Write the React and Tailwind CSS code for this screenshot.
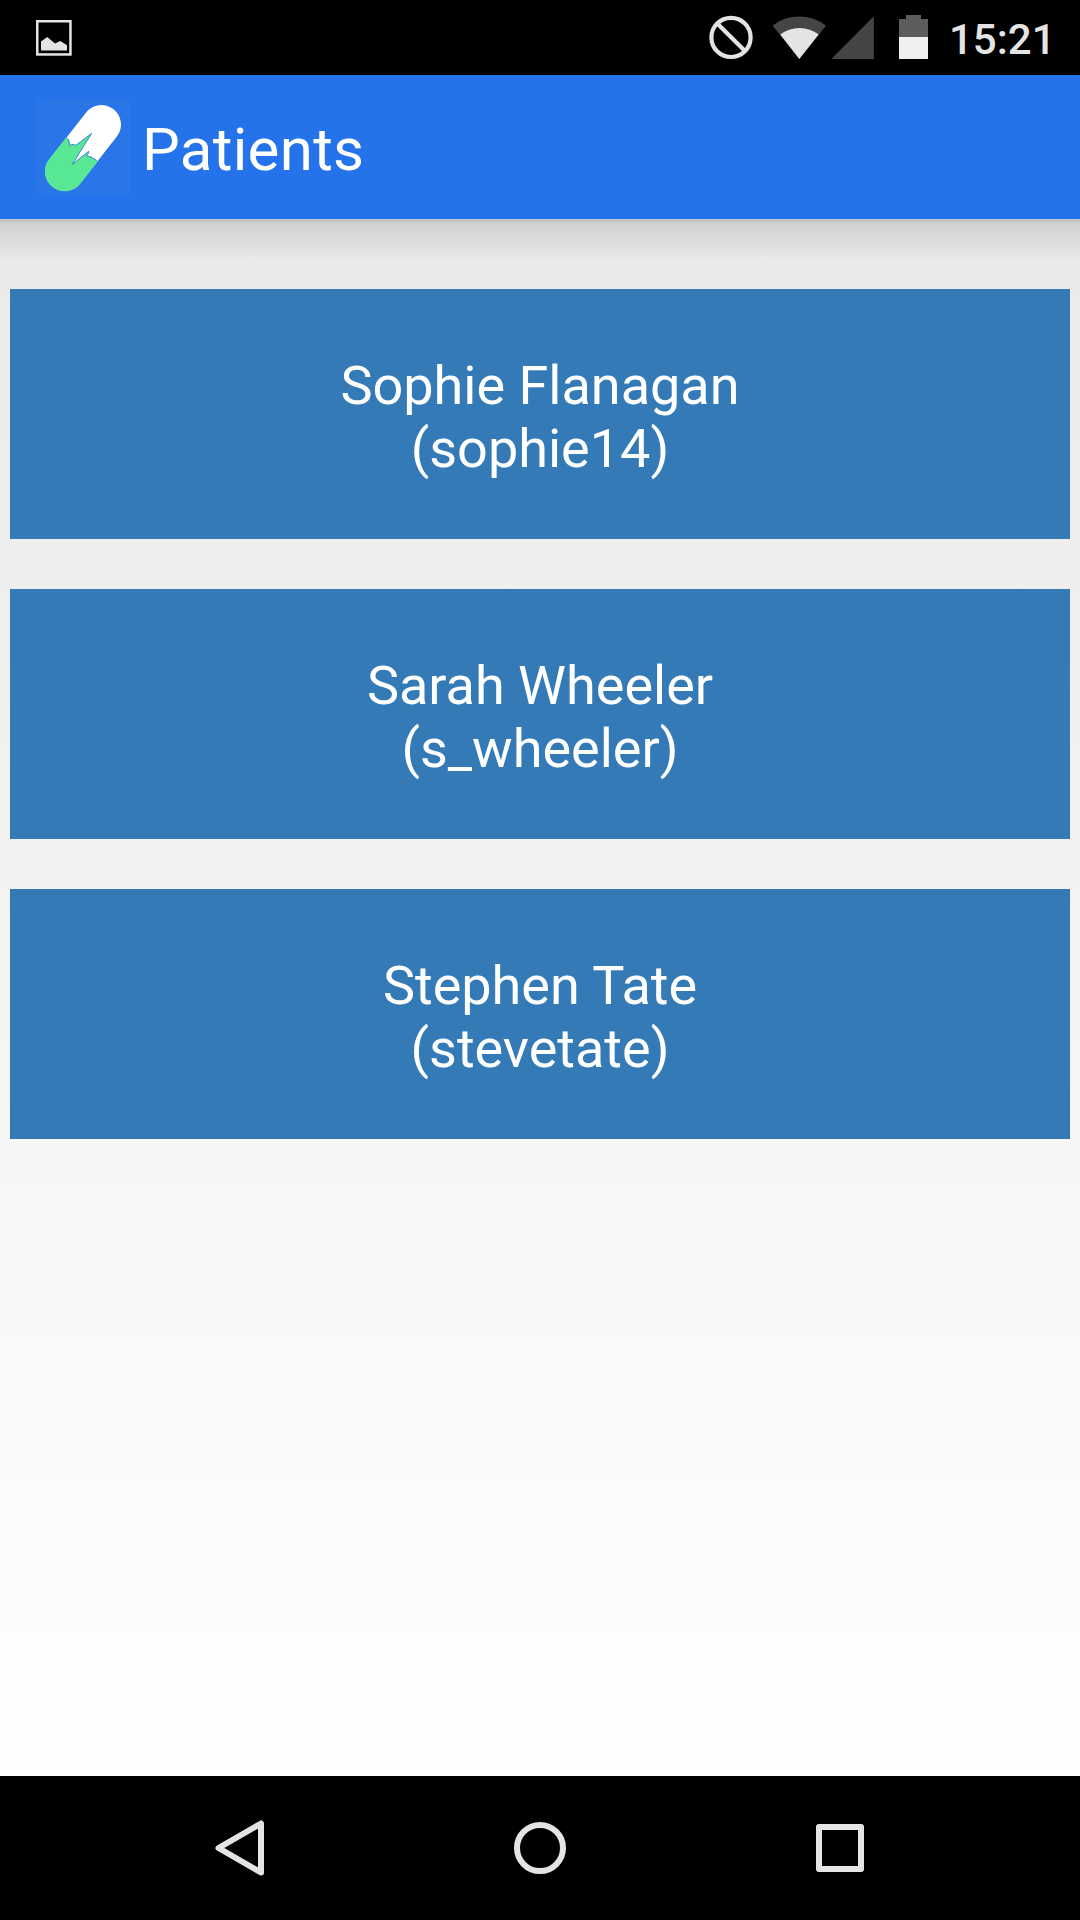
const patients = [
  { name: "Sophie Flanagan", login: "sophie14" },
  { name: "Sarah Wheeler", login: "s_wheeler" },
  { name: "Stephen Tate", login: "stevetate" },
];

function PictureIcon() {
  return (
    <svg className="ml-9 h-[36px] w-[36px]" viewBox="0 0 36 36">
      <rect x="1.25" y="1.25" width="33.2" height="33.2" fill="none" stroke="#e4e4e4" strokeWidth="2.5" />
      <path d="M5 30.5V21.5L11.3 17L19 23.5L24.3 21L31 25.3V30.5Z" fill="#e4e4e4" />
    </svg>
  );
}

function StatusIcons() {
  return (
    <svg className="h-[75px] w-[240px]" viewBox="700 0 240 75">
      <g fill="none" stroke="#e4e4e4" strokeWidth="4.2">
        <circle cx="731" cy="37.4" r="19.6" />
        <path d="M717.5 23.8L745 51" />
      </g>
      <path d="M799.3 58.9L772.6 25.8A42.8 42.8 0 0 1 826 25.8Z" fill="#454545" />
      <path d="M799.3 58.9L780.3 34.6A31 31 0 0 1 818.6 34.6Z" fill="#e4e4e4" />
      <path d="M831.3 59L873.8 16.3V59Z" fill="#454545" />
      <path d="M906 15H921V19H928V37H899V19H906Z" fill="#5c5c5c" />
      <path d="M899 37H928V59H899Z" fill="#f0f0f0" />
    </svg>
  );
}

function PillLogo() {
  return (
    <svg className="ml-[37px] h-[96px] w-[93px] bg-[#2a75e8]" viewBox="37 99 93 96">
      <defs>
        <clipPath id="lower-half">
          <path d="M60 133L66.700 138L68.700 139.700L69.700 145.300L73.300 144.300L75.700 145.300L80.700 141.700L91.700 133.300L72.300 164.300L88.700 151.300L88.300 153.300L86.300 156L91.300 157L97 160.700L102 164V195H37V133Z" />
        </clipPath>
      </defs>
      <path d="M101.500 124.500L64.700 171.500" stroke="#fff" strokeWidth="39" strokeLinecap="round" />
      <path d="M101.500 124.500L64.700 171.500" stroke="#58e895" strokeWidth="39.600" strokeLinecap="round" clipPath="url(#lower-half)" />
      <path d="M66.700 138L68.700 139.700L69.700 145.300L73.300 144.300L75.700 145.300L80.700 141.700L91.700 133.300L72.300 164.300L88.700 151.300L88.300 153.300L86.300 156L91.300 157L97 160.700" fill="none" stroke="#2c7cd0" strokeWidth="0.9" />
    </svg>
  );
}

function NavBar() {
  return (
    <nav className="h-36 shrink-0 bg-black">
      <svg className="h-36 w-full" viewBox="0 1776 1080 144" fill="none" stroke="#e4e4e4" strokeWidth="6" strokeLinejoin="round">
        <path d="M261 1823.500V1872.500L218.500 1848Z" />
        <circle cx="540" cy="1848" r="23" />
        <rect x="819" y="1827" width="42" height="42" />
      </svg>
    </nav>
  );
}

export default function App() {
  return (
    <div className="flex h-[1920px] w-[1080px] flex-col overflow-hidden bg-white font-['Roboto',sans-serif]">
      <div className="flex h-[75px] shrink-0 items-center justify-between bg-black">
        <PictureIcon />
        <div className="flex items-center">
          <StatusIcons />
          <span className="w-[140px] pl-[9px] pt-[3px] text-[42px] leading-[49px] font-medium text-[#e4e4e4]">15:21</span>
        </div>
      </div>
      <header className="flex h-36 shrink-0 items-center bg-[#2473eb]">
        <PillLogo />
        <h1 className="pl-[12px] pt-[5px] text-[60px] leading-[70px] font-normal tracking-[0.3px] text-white">Patients</h1>
      </header>
      <main className="min-h-0 flex-1 bg-linear-to-b from-[#eaeaea] to-white">
        <div className="h-[3px] bg-[#c3c3c3]" />
        <div className="h-[37px] bg-linear-to-b from-[#cfcfcf] to-[#eaeaea]" />
        <div className="mt-[30px] flex flex-col gap-[50px] px-2.5">
          {patients.map((p) => (
            <button key={p.login} className="flex h-[250px] flex-col items-center justify-center bg-[#337ab7] pt-[6px] text-[54px] leading-[63px] text-white">
              <span>{p.name}</span>
              <span>({p.login})</span>
            </button>
          ))}
        </div>
      </main>
      <NavBar />
    </div>
  );
}
